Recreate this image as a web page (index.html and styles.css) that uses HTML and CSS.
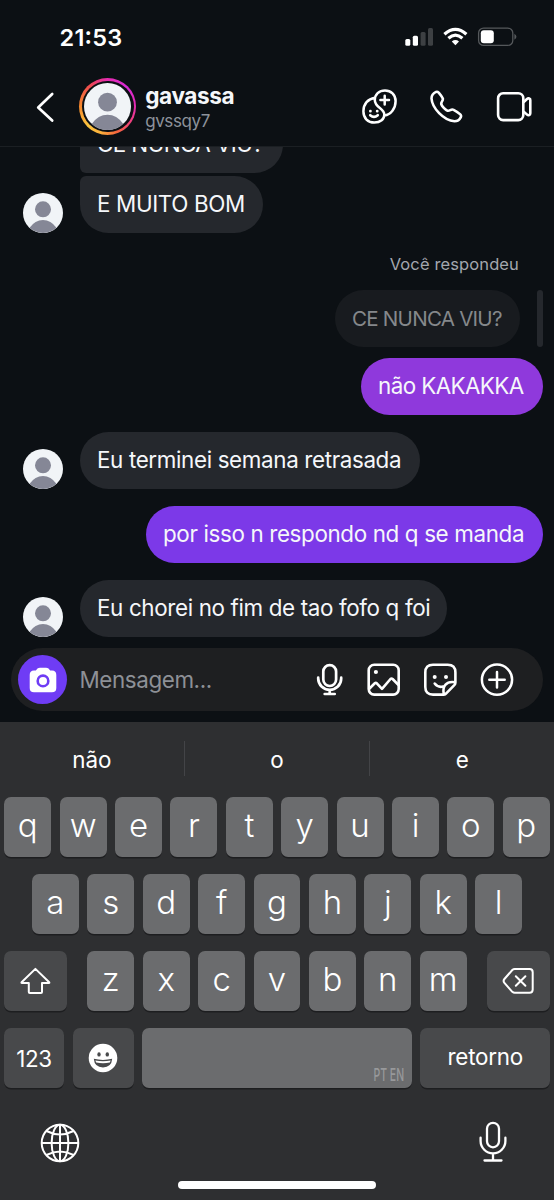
FILE: index.html
```html
<!DOCTYPE html>
<html lang="pt-BR">
<head>
<meta charset="utf-8">
<meta name="viewport" content="width=device-width, initial-scale=1">
<title>gavassa</title>
<link rel="stylesheet" href="styles.css">
</head>
<body>
<svg class="defs" width="0" height="0" aria-hidden="true">
  <symbol id="person" viewBox="0 0 40 40">
    <circle cx="20" cy="20" r="20" fill="#f1f4f7"/>
    <circle cx="20" cy="16.3" r="8" fill="#858796"/>
    <path d="M6.6 34.8Q12 27 20 27T33.4 34.8A20 20 0 0 1 6.6 34.8Z" fill="#858796"/>
  </symbol>
</svg>
<div class="phone">
  <div class="status">
    <span class="clock">21:53</span>
    <svg class="indicators" width="114" height="22" viewBox="0 0 114 22">
      <g fill="#fff"><rect x="2.3" y="13" width="5" height="6.7" rx="1.5"/><rect x="9.8" y="9.8" width="5.2" height="9.9" rx="1.5"/></g>
      <g fill="#3d4043"><rect x="17.6" y="6" width="5" height="13.7" rx="1.5"/><rect x="25" y="2" width="5" height="17.7" rx="1.5"/></g>
      <g fill="none" stroke="#fff" stroke-width="3.2"><path d="M41.4 8.2Q52.4-1.6 63.4 8.2"/><path d="M45.4 12.3Q52.4 6 59.4 12.3"/></g>
      <path d="M48.8 15.4Q52.4 12.6 56 15.4L52.4 19.3Z" fill="#fff"/>
      <rect x="75.6" y="2.1" width="34.2" height="17.3" rx="5" fill="none" stroke="#55585b" stroke-width="1.3"/>
      <rect x="77.8" y="4.3" width="13" height="13" rx="3" fill="#fff"/>
      <path d="M111.4 7.8Q115.5 10.8 111.4 13.8Z" fill="#55585b"/>
    </svg>
  </div>
  <header class="header">
    <svg class="back" width="20" height="32" viewBox="0 0 20 32"><path d="M16.2 3L2.2 16.5L16.2 29.5" fill="none" stroke="#fff" stroke-width="2.7" stroke-linecap="round" stroke-linejoin="round"/></svg>
    <div class="story"><div class="story-gap"><svg width="47" height="47"><use href="#person"/></svg></div></div>
    <div class="who"><div class="name"><span>gavassa</span></div><div class="handle"><span>gvssqy7</span></div></div>
    <div class="actions">
      <svg width="35" height="35" viewBox="0 0 35 35" fill="none" stroke="#fff" stroke-width="2.5" stroke-linecap="round" stroke-linejoin="round">
        <path d="M12.8 8.7C6 9.8 1.4 15 1.4 22.3C1.4 29.3 6 33.6 12.3 33.6C18.5 33.6 22.3 30 22.3 25.7C22.3 19 12.8 19 12.8 11C12.8 5.5 17 1.4 23 1.4C29 1.4 33.6 5.7 33.6 12C33.6 19.5 29 25.5 22.3 26.5"/>
        <path d="M22.7 6.8V15.4M18.4 11.1H27M8.2 26.2Q12 29.6 15.8 26.2"/>
        <path d="M8.4 22.1V22.2M15.2 22.1V22.2" stroke-width="2.8"/>
      </svg>
      <svg width="33" height="34" viewBox="0 0 33 34" fill="none" stroke="#fff" stroke-width="2.6" stroke-linejoin="round"><path d="M1.5 8.5C1.5 5 4 2.8 6 1.9Q7.5 1.4 8.7 2.6C10.5 4.7 12 6.5 12.8 8.5C13.5 10.7 10.6 12 11.3 14.3C12 16.3 15.2 20 17.5 20.7C20 21.3 21 18.5 23.6 19.8C26 21 28.5 22.8 30.3 24.4Q31.6 25.7 30.7 27.3C29.5 29.7 27.5 31.2 24.5 31.3C13.5 30.5 2.2 18 1.5 8.5Z"/></svg>
      <svg width="36" height="32" viewBox="0 0 36 32" fill="none" stroke="#fff" stroke-width="2.6" stroke-linejoin="round"><rect x="2.1" y="2.3" width="25.2" height="26.8" rx="5"/><path d="M27.5 11.2L31 8Q32 7.1 33.2 7.5T34.3 9.2V22.2Q34.3 23.7 33.2 24.1T31 23.6L27.5 20.4"/></svg>
    </div>
  </header>

  <main class="chat">
    <div class="row"><div class="bubble in first"><span class="caps">CE NUNCA VIU?</span></div></div>
    <div class="row g3"><svg class="avatar"><use href="#person"/></svg><div class="bubble in second"><span>E MUITO BOM</span></div></div>
    <div class="reply-label"><span>Você respondeu</span></div>
    <div class="row out quote"><div class="bubble quoted"><span>CE NUNCA VIU?</span></div><i class="quote-bar"></i></div>
    <div class="row out g11"><div class="bubble violet"><span class="caps">não KAKAKKA</span></div></div>
    <div class="row g17"><svg class="avatar"><use href="#person"/></svg><div class="bubble in b4"><span>Eu terminei semana retrasada</span></div></div>
    <div class="row out g17"><div class="bubble indigo"><span>por isso n respondo nd q se manda</span></div></div>
    <div class="row g17"><svg class="avatar"><use href="#person"/></svg><div class="bubble in b6"><span>Eu chorei no fim de tao fofo q foi</span></div></div>
  </main>

  <div class="composer">
    <div class="camera"><svg width="28" height="26" viewBox="0 0 28 26"><path d="M5 3.5H6.8L8.5 1.6Q9.5.7 11 .7H17Q18.5.7 19.5 1.6L21.2 3.5H23Q27.3 3.7 27.3 8V21Q27.3 25.3 23 25.3H5Q.7 25.3.7 21V8Q.7 3.7 5 3.5Z" fill="#fff"/><circle cx="14" cy="13.9" r="5.3" fill="none" stroke="#6f3cf5" stroke-width="2.6"/></svg></div>
    <span class="placeholder">Mensagem...</span>
    <div class="tools">
      <svg width="28" height="34" viewBox="0 0 28 34" fill="none" stroke="#fff" stroke-width="2.7" stroke-linecap="round"><rect x="7.3" y="2.2" width="12.8" height="20.8" rx="6.4"/><path d="M2.2 14.7V15.5A11.5 11.3 0 0 0 25.2 15.5V14.7M13.7 27V31M8.7 31H18.7"/></svg>
      <svg width="33" height="34" viewBox="0 0 33 34" fill="none" stroke="#fff" stroke-width="2.6" stroke-linejoin="round"><rect x="1.7" y="1.8" width="30" height="29.8" rx="5.5"/><path d="M2 26L7.8 20.3Q8.8 19.4 9.8 20.3L15 25.8L23.5 16Q24.5 15 25.6 16L31.5 22"/><circle cx="8.9" cy="9" r="2.1" fill="#fff" stroke="none"/></svg>
      <svg width="34" height="34" viewBox="0 0 34 34" fill="none" stroke="#fff" stroke-width="2.6" stroke-linecap="round" stroke-linejoin="round"><path d="M20.8 31.6H10Q2.3 31.6 2.3 23.9V9.5Q2.3 1.8 10 1.8H24.7Q32.4 1.8 32.4 9.5V19.5Q32.4 21 31.3 22.2L23.5 30.2Q22.3 31.6 20.8 31.6ZM20.8 31.2C19 23 23.5 17.8 32 19.2M11.7 20.6Q14.8 24.8 20 23.6"/><g fill="#fff" stroke="none"><circle cx="11.7" cy="14" r="2"/><circle cx="23" cy="14" r="2"/></g></svg>
      <svg width="34" height="34" viewBox="0 0 34 34" fill="none" stroke="#fff" stroke-width="2.5" stroke-linecap="round"><circle cx="17" cy="16.7" r="15.1"/><path d="M17 9V24.4M9.3 16.7H24.7"/></svg>
    </div>
  </div>

  <section class="keyboard">
    <div class="suggestions"><span>não</span><i></i><span>o</span><i></i><span>e</span></div>
    <div class="keys"><b>q</b><b>w</b><b>e</b><b>r</b><b>t</b><b>y</b><b>u</b><b>i</b><b>o</b><b>p</b></div>
    <div class="keys"><b>a</b><b>s</b><b>d</b><b>f</b><b>g</b><b>h</b><b>j</b><b>k</b><b>l</b></div>
    <div class="keys spread">
      <div class="key wide"><svg width="31" height="28" viewBox="0 0 31 28"><path d="M15.4 1.9L29.2 15.2Q29.7 16 28.8 16.1H22V25Q22 26 21 26H9.8Q8.8 26 8.8 25V16.1H2Q1.1 16 1.6 15.2Z" fill="none" stroke="#fff" stroke-width="2" stroke-linejoin="round"/></svg></div>
      <div class="keys inner"><b>z</b><b>x</b><b>c</b><b>v</b><b>b</b><b>n</b><b>m</b></div>
      <div class="key wide"><svg width="32" height="28" viewBox="0 0 32 28" fill="none" stroke="#fff" stroke-width="2" stroke-linecap="round" stroke-linejoin="round"><path d="M12.8 2H27.5Q30.7 2 30.7 5.2V22.6Q30.7 25.8 27.5 25.8H12.8Q11.4 25.8 10.3 24.8L2.4 15.8Q.8 13.9 2.4 12L10.3 3Q11.4 2 12.8 2Z"/><path d="M13.8 9.2L23.4 18.8M23.4 9.2L13.8 18.8"/></svg></div>
    </div>
    <div class="keys">
      <div class="key num"><span>123</span></div>
      <div class="key emoji"><svg width="30" height="30" viewBox="0 0 30 30"><circle cx="15" cy="15" r="14.3" fill="#fff"/><g fill="#48494b"><ellipse cx="11" cy="11.4" rx="1.7" ry="2.2"/><ellipse cx="19.3" cy="11.4" rx="1.7" ry="2.2"/><path d="M5.8 15.8Q15 18 24.2 15.8Q23.5 24.4 15 24.4T5.8 15.8Z"/></g><path d="M7.3 17.4Q15 19 22.7 17.4L21.8 19.5Q15 21 8.2 19.5Z" fill="#fff"/></svg></div>
      <div class="key space"><span>PT EN</span></div>
      <div class="key return"><span>retorno</span></div>
    </div>
    <div class="bottom">
      <svg class="globe" width="40" height="40" viewBox="0 0 40 40" fill="none" stroke="#fff" stroke-width="2"><circle cx="20" cy="20" r="18.3"/><ellipse cx="20" cy="20" rx="8.4" ry="18.3"/><path d="M20 1.7V38.3M1.7 20H38.3M6.5 8Q20 15 33.5 8M6.5 32Q20 25 33.5 32"/></svg>
      <svg width="28" height="42" viewBox="0 0 28 42" fill="none" stroke="#fff" stroke-width="2.3" stroke-linecap="round"><rect x="8" y="1.8" width="12" height="24.5" rx="6"/><path d="M1.6 16.7V20A12.4 12.3 0 0 0 26.4 20V16.7M14 32.5V39.5M5.5 39.5H22.5"/></svg>
    </div>
    <div class="home"></div>
  </section>
</div>
</body>
</html>
```
FILE: styles.css
```css
* { box-sizing: border-box; }
body { margin: 0; background: #0c1014; }
svg { display: block; flex: none; }
.defs { position: absolute; }
.phone {
  width: 554px;
  height: 1200px;
  display: flex;
  flex-direction: column;
  overflow: hidden;
  background: #0c1014;
  color: #f5f7fa;
  font-family: Inter, "Noto Sans", sans-serif;
  white-space: nowrap;
}

/* status bar and header */
.status { height: 68px; padding: 26px 35px 0 59.5px; display: flex; justify-content: space-between; }
.indicators { margin-right: 2px; }
.clock { font-size: 23.5px; line-height: 23px; font-weight: 600; letter-spacing: .25px; font-feature-settings: "case"; color: #fff; }
.header { height: 79px; padding: 0 22px 1px 36px; display: flex; align-items: center; border-bottom: 1px solid #1b1f23; }
.story {
  width: 57px; height: 57px; margin-left: 23.2px; border-radius: 50%; padding: 2.6px; flex: none;
  background: conic-gradient(#e62bb0 0deg, #d82ad6 45deg, #e62bb0 90deg, #f0427a 125deg, #f5653c 160deg, #fbb03b 195deg, #fbc43e 225deg, #f78a2c 270deg, #ee4a50 320deg, #e62bb0 360deg);
}
.story-gap { height: 100%; border-radius: 50%; background: #0c1014; display: flex; align-items: center; justify-content: center; }
.who { margin-left: 9px; padding-top: 4px; flex: 1; }
.name { font-size: 22.6px; line-height: 26px; font-weight: 700; letter-spacing: -.4px; color: #f5f7fa; }
.handle { font-size: 17px; line-height: 25px; letter-spacing: -.4px; color: #8d929b; }
.actions { display: flex; align-items: center; gap: 33px; }

/* conversation */
.chat { height: 501px; flex: none; overflow: hidden; padding: 0 11px 11px 23px; display: flex; flex-direction: column; justify-content: flex-end; }
.row { display: flex; align-items: flex-end; flex: none; }
.row:first-child { padding-left: 57px; }
.avatar { width: 40px; height: 40px; margin-right: 17px; }
.out { justify-content: flex-end; }
.g3 { margin-top: 3px; }
.g11 { margin-top: 11px; }
.g17 { margin-top: 17px; }
.bubble { height: 57px; padding: 0 0 3px 17px; border-radius: 28.5px; font-size: 22.4px; letter-spacing: -.36px; display: flex; align-items: center; }
.caps { letter-spacing: -.58px; }
.in { background: #25282d; }
.first { width: 203px; border-bottom-left-radius: 6px; }
.second { width: 183px; border-top-left-radius: 6px; }
.b4 { width: 340px; }
.b6 { width: 367px; }
.violet { width: 182px; background: #8f39dc; }
.indigo { width: 397px; background: #7c39e8; }
.reply-label { margin: 21px 24px 15px 0; font-size: 16.5px; line-height: 21px; color: #a3a7ae; text-align: right; letter-spacing: .12px; }
.quoted { width: 185px; padding-bottom: 1px; background: #181b1f; color: #85888b; font-size: 20.6px; letter-spacing: -.78px; }
.quote-bar { width: 6px; height: 57px; margin-left: 17px; border-radius: 3px; background: #25282d; }

/* message field */
.composer { height: 63px; flex: none; margin: 0 11px 11px; padding: 0 29px 0 7px; border-radius: 32px; background: #1e1f21; display: flex; align-items: center; }
.camera { width: 49px; height: 49px; border-radius: 50%; background: #6f3cf5; display: flex; align-items: center; justify-content: center; flex: none; }
.placeholder { margin-left: 12.5px; font-size: 22.4px; letter-spacing: -.4px; color: #8d9096; }
.tools { margin-left: auto; display: flex; align-items: center; gap: 23px; }

/* keyboard */
.keyboard { flex: 1; background: #2e2f31; color: #fff; }
.suggestions { height: 75px; padding-bottom: 1px; display: flex; align-items: center; font-size: 22.4px; }
.suggestions span { flex: 1; text-align: center; }
.suggestions i { width: 1.5px; height: 35px; margin-top: -1px; background: #434447; }
.keys { display: flex; justify-content: center; gap: 8.5px; margin-bottom: 17px; }
.keys b, .key { height: 60px; border-radius: 7px; background: #6b6c6e; box-shadow: 0 1.5px 0 #1d1e20; display: flex; align-items: center; justify-content: center; }
.keys b { width: 46.9px; padding-bottom: 5px; font-size: 33px; font-weight: 320; }
.spread { justify-content: space-between; padding: 0 4.2px; }
.inner { margin: 0; }
.key { background: #48494b; font-size: 22.4px; }
.wide { width: 63px; }
.num { width: 60.4px; letter-spacing: -.4px; }
.emoji { width: 61px; }
.return { width: 130px; padding-bottom: 3px; letter-spacing: -.25px; }
.space { width: 269.5px; background: #6b6c6e; justify-content: flex-end; align-items: flex-end; padding: 0 8px 3px 0; }
.space span { font-size: 17.5px; line-height: 20px; font-weight: 500; color: #98999b; transform: scaleX(.6); transform-origin: right; }
.bottom { display: flex; justify-content: space-between; padding: 15.5px 47px 0 40px; }
.globe { margin-top: 2px; }
.home { width: 198px; height: 8px; margin: 18.5px auto 0; border-radius: 4px; background: #fff; }
```
